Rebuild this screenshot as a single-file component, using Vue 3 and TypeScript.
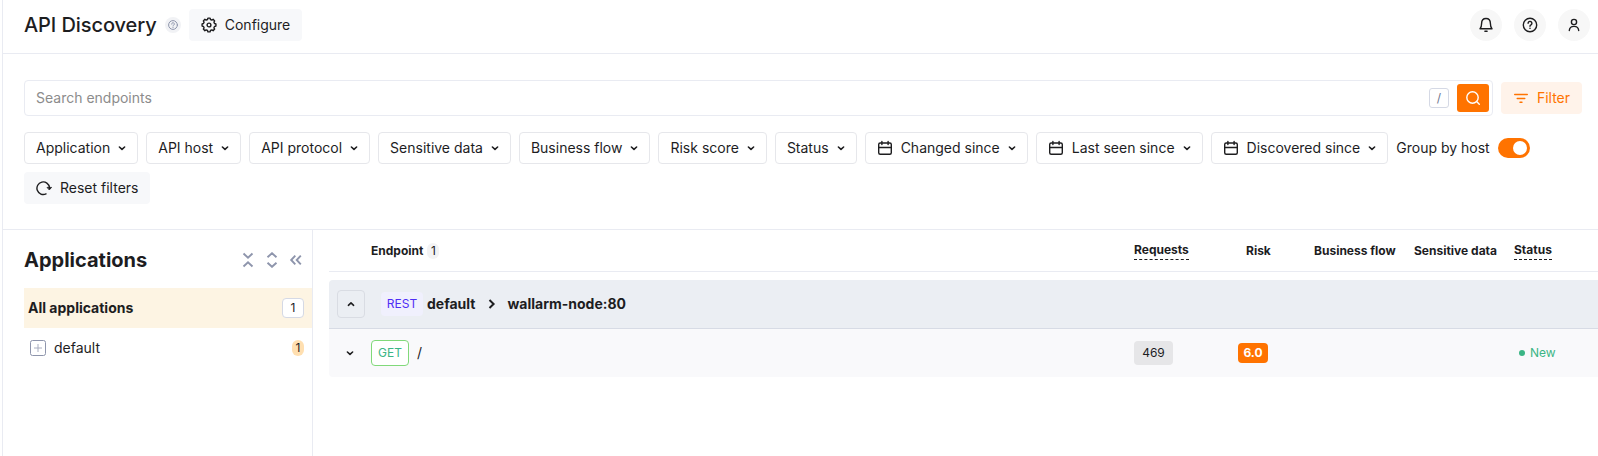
<script setup lang="ts">
interface FilterItem {
  label: string
  date?: boolean
}

const filters: FilterItem[] = [
  { label: 'Application' },
  { label: 'API host' },
  { label: 'API protocol' },
  { label: 'Sensitive data' },
  { label: 'Business flow' },
  { label: 'Risk score' },
  { label: 'Status' },
  { label: 'Changed since', date: true },
  { label: 'Last seen since', date: true },
  { label: 'Discovered since', date: true },
]

// Outline of a gear with eight teeth, centred in a 16 × 16 box
function gearOutline(): string {
  const points: string[] = []
  for (let tooth = 0; tooth < 8; tooth++) {
    for (const [offset, radius] of [[-15, 5.7], [-9, 7], [9, 7], [15, 5.7]]) {
      const angle = ((tooth * 45 + offset) * Math.PI) / 180
      points.push(`${(8 + radius * Math.cos(angle)).toFixed(2)} ${(8 + radius * Math.sin(angle)).toFixed(2)}`)
    }
  }
  return `M${points.join('L')}Z`
}

const gear = gearOutline()
</script>

<template>
  <div class="page">
    <header class="topbar">
      <h1 class="title">API Discovery</h1>
      <span class="hint">
        <svg width="10" height="10" viewBox="0 0 10 10" class="line"><circle cx="5" cy="5" r="4.400" /><path d="M3.700 4.100a1.300 1.300 0 1 1 2 1c-.5.3-.7.500-.7.900M5 7.400v.1" /></svg>
      </span>
      <button class="soft configure">
        <svg width="16" height="16" viewBox="0 0 16 16" class="line"><path :d="gear" /><circle cx="8" cy="8" r="1.900" /></svg>
        <span>Configure</span>
      </button>
      <div class="actions">
        <button class="round">
          <svg width="16" height="16" viewBox="0 0 16 16" class="line"><path d="M2 11.700c1.300-1.200 1.600-2.700 1.600-5.200C3.600 3.500 5.300 1.500 8 1.500s4.400 2 4.400 5c0 2.500.3 4 1.600 5.200z" /><path d="M6.900 14.300h2.200" /></svg>
        </button>
        <button class="round">
          <svg width="16" height="16" viewBox="0 0 16 16" class="line"><circle cx="8" cy="8" r="6.700" /><path d="M6.100 6.300a1.900 1.900 0 1 1 2.900 1.600c-.7.4-1 .7-1 1.300M8 11.100v.3" /></svg>
        </button>
        <button class="round">
          <svg width="16" height="16" viewBox="0 0 16 16" class="line"><circle cx="8" cy="5" r="2.600" /><path d="M3.300 13.500c.2-2.600 2-4.100 4.700-4.100s4.500 1.500 4.700 4.100" /></svg>
        </button>
      </div>
    </header>

    <section class="controls">
      <div class="search-row">
        <div class="search">
          <span class="placeholder">Search endpoints</span>
          <kbd>/</kbd>
          <button class="go">
            <svg width="16" height="16" viewBox="0 0 16 16" class="line"><circle cx="7.500" cy="7.500" r="5.700" /><path d="M11.600 11.600l2.700 2.700" /></svg>
          </button>
        </div>
        <button class="filter-btn">
          <svg width="16" height="16" viewBox="0 0 16 16" class="line"><path d="M1.700 4.500h12.600M4.200 8.500h7.600M7 12.200h2" /></svg>
          <span>Filter</span>
        </button>
      </div>
      <div class="filters">
        <button v-for="f in filters" :key="f.label" class="chip">
          <svg v-if="f.date" class="line cal" width="16" height="16" viewBox="0 0 16 16"><rect x="1.700" y="3" width="12.600" height="11.300" rx="1.500" /><path d="M1.700 7.500h12.600M4.900 1.500v3M11.100 1.500v3" /></svg>
          <span>{{ f.label }}</span>
          <svg class="line chev" width="16" height="16" viewBox="0 0 16 16"><path d="M5.400 7L8 9.400 10.600 7" /></svg>
        </button>
        <label class="group">
          <span>Group by host</span>
          <span class="toggle"><i></i></span>
        </label>
        <button class="soft reset">
          <svg width="16" height="16" viewBox="0 0 16 16" class="line"><path d="M10 13.900A6.300 6.300 0 1 1 13.500 7.500" /><path class="tip" d="M11.400 7.400h4.200l-2.100 2.300z" /></svg>
          <span>Reset filters</span>
        </button>
      </div>
    </section>

    <main class="body">
      <aside class="sidebar">
        <div class="side-head">
          <h2>Applications</h2>
          <svg width="16" height="16" viewBox="0 0 16 16" class="line tool"><path d="M3.500 1.500L8 5.700l4.500-4.200M3.500 14.500L8 10.300l4.500 4.200" /></svg>
          <svg width="16" height="16" viewBox="0 0 16 16" class="line tool"><path d="M3.500 5.300L8 1.200l4.500 4.100M3.500 10.700L8 14.800l4.500-4.100" /></svg>
          <svg width="16" height="16" viewBox="0 0 16 16" class="line tool"><path d="M7.300 3.700L3.200 8l4.100 4.300M12.800 3.700L8.700 8l4.100 4.300" /></svg>
        </div>
        <div class="app all">
          <span>All applications</span>
          <span class="count">1</span>
        </div>
        <div class="app item">
          <svg class="plus" width="16" height="16" viewBox="0 0 16 16"><rect x=".5" y=".5" width="15" height="15" rx="2" /><path d="M4 8h8M8 4v8" /></svg>
          <span>default</span>
          <span class="pill">1</span>
        </div>
      </aside>

      <div class="table">
        <div class="row head">
          <span></span>
          <span class="endpoint">Endpoint <i class="num">1</i></span>
          <span><b class="sort">Requests</b></span>
          <span class="risk-title">Risk</span>
          <span>Business flow</span>
          <span>Sensitive data</span>
          <span><b class="sort">Status</b></span>
        </div>
        <div class="host">
          <button class="expand">
            <svg class="line" width="16" height="16" viewBox="0 0 16 16"><path d="M5.400 9.300L8 6.900l2.600 2.400" /></svg>
          </button>
          <span class="rest">REST</span>
          <strong>default</strong>
          <svg class="line sep" width="16" height="16" viewBox="0 0 16 16"><path d="M6.500 4l4.100 4-4.100 4" /></svg>
          <strong>wallarm-node:80</strong>
        </div>
        <div class="row data">
          <span class="open">
            <svg class="line" width="16" height="16" viewBox="0 0 16 16"><path d="M5.400 7L8 9.400 10.600 7" /></svg>
          </span>
          <span class="path"><span class="get">GET</span>/</span>
          <span><span class="requests">469</span></span>
          <span><span class="risk">6.0</span></span>
          <span></span>
          <span></span>
          <span class="new"><i></i>New</span>
        </div>
      </div>
    </main>
  </div>
</template>

<style>
body {
  margin: 0;
  background: #fff;
}
</style>

<style scoped>
* {
  box-sizing: border-box;
}
.page {
  width: 1596px;
  height: 456px;
  margin-left: 2px;
  border-left: 1px solid #e9ebf2;
  overflow: hidden;
  display: flex;
  flex-direction: column;
  background: #fff;
  color: #1d1d1f;
  font: 14px/20px Inter, "Liberation Sans", sans-serif;
}
button {
  font: inherit;
  color: inherit;
  border: 0;
  padding: 0;
  display: flex;
  align-items: center;
  justify-content: center;
}
svg {
  display: block;
  flex: none;
}
.line {
  fill: none;
  stroke: currentColor;
  stroke-width: 1.4;
  stroke-linecap: round;
  stroke-linejoin: round;
}
.topbar {
  flex: none;
  height: 54px;
  padding: 0 8px 4px 21px;
  display: flex;
  align-items: center;
  border-bottom: 1px solid #e9ebf2;
}
.title {
  margin: 0;
  width: 141px;
  font-size: 20px;
  line-height: 28px;
  font-weight: 500;
  letter-spacing: -0.08px;
  white-space: nowrap;
}
.hint {
  width: 16px;
  height: 16px;
  border-radius: 50%;
  background: #f1f2f5;
  color: #8e95ac;
  display: flex;
  align-items: center;
  justify-content: center;
}
.hint svg {
  stroke-width: 1;
}
.soft {
  height: 32px;
  gap: 8px;
  padding: 0 12px;
  border-radius: 4px;
  background: #f7f8fa;
}
.configure {
  width: 113px;
  margin-left: 8px;
}
.tip {
  fill: currentColor;
  stroke-width: 0.8;
}
.actions {
  margin-left: auto;
  display: flex;
  gap: 12px;
}
.round {
  width: 32px;
  height: 32px;
  border-radius: 50%;
  background: #f7f7f7;
}
.controls {
  flex: none;
  height: 176px;
  padding: 26px 16px 0 21px;
  border-bottom: 1px solid #e9ebf2;
}
.search-row {
  display: flex;
  align-items: center;
  gap: 8px;
}
.search {
  width: 1469px;
  height: 36px;
  padding: 0 3px 0 11px;
  display: flex;
  align-items: center;
  border: 1px solid #e9ebf2;
  border-radius: 4px;
}
.placeholder {
  flex: 1;
  color: #8c8c8c;
}
kbd {
  width: 20px;
  height: 20px;
  margin-right: 8px;
  border: 1px solid #d5d9e5;
  border-radius: 3px;
  color: #6f7690;
  font: 12px/18px Inter, sans-serif;
  text-align: center;
}
.go {
  width: 32px;
  height: 28px;
  border-radius: 3px;
  background: #ff7300;
  color: #fff;
}
.filter-btn {
  width: 81px;
  height: 32px;
  gap: 8px;
  border-radius: 4px;
  background: #fff3ea;
  color: #ff7300;
}
.filters {
  margin-top: 16px;
  display: flex;
  flex-wrap: wrap;
  gap: 8px;
}
.chip {
  height: 32px;
  padding: 0 7px 0 11px;
  background: #fff;
  border: 1px solid #e6e7eb;
  border-radius: 4px;
  white-space: nowrap;
}
.cal {
  margin-right: 8px;
}
.chev {
  margin-left: 4px;
  stroke-width: 1.6;
}
.group {
  height: 32px;
  display: flex;
  align-items: center;
  gap: 8px;
  margin-right: 40px;
}
.toggle {
  width: 32px;
  height: 20px;
  padding: 3px;
  border-radius: 10px;
  background: #ff7300;
  display: flex;
  justify-content: flex-end;
}
.toggle i {
  width: 14px;
  height: 14px;
  border-radius: 50%;
  background: #fff;
}
.body {
  flex: 1;
  display: flex;
}
.sidebar {
  width: 310px;
  padding-left: 21px;
  border-right: 1px solid #e9ebf2;
}
.side-head {
  height: 58px;
  padding: 2px 8px 0 0;
  display: flex;
  align-items: center;
  gap: 8px;
}
.side-head h2 {
  flex: 1;
  margin: 0;
  font-size: 20px;
  line-height: 28px;
  font-weight: 700;
}
.tool {
  color: #8e95ac;
  stroke-width: 1.9;
  stroke-linecap: butt;
  stroke-linejoin: miter;
}
.app {
  height: 40px;
  display: flex;
  align-items: center;
  justify-content: space-between;
}
.all {
  padding: 0 8px 0 4px;
  background: #fdf4e3;
  font-weight: 700;
}
.count {
  width: 22px;
  height: 20px;
  border: 1px solid #d5d9e5;
  border-radius: 4px;
  background: #fff;
  font: 12px/18px Inter, sans-serif;
  text-align: center;
}
.item {
  padding: 0 8px 0 6px;
}
.item > span:nth-child(2) {
  flex: 1;
  margin-left: 8px;
}
.plus {
  fill: none;
  stroke: #8e95ac;
}
.plus path {
  stroke: #a9aec0;
}
.pill {
  width: 12px;
  height: 16px;
  border-radius: 6px;
  background: #ffdfb0;
  font-size: 12px;
  line-height: 16px;
  text-align: center;
}
.table {
  flex: 1;
  padding-left: 16px;
}
.row {
  display: grid;
  grid-template-columns: 42px 763px 104px 76px 100px 100px 1fr;
  align-items: center;
}
.head {
  height: 42px;
  border-bottom: 1px solid #e9ebf2;
  font-size: 12px;
  line-height: 16px;
  font-weight: 700;
}
.endpoint {
  display: flex;
  gap: 4px;
}
.num {
  width: 12px;
  height: 16px;
  border-radius: 6px;
  background: #f3f3f4;
  font-style: normal;
  font-weight: 400;
  text-align: center;
}
.sort {
  display: inline-block;
  font-weight: 700;
  padding-bottom: 1px;
  border-bottom: 1px dashed #1d1d1f;
}
.risk-title {
  padding-left: 8px;
}
.host {
  height: 49px;
  margin-top: 8px;
  padding-left: 8px;
  display: flex;
  align-items: center;
  background: #ebeef3;
  border-bottom: 1px solid #d7dbe5;
  border-radius: 4px 0 0 0;
}
.expand {
  width: 28px;
  height: 28px;
  margin-right: 16px;
  border: 1px solid #d9dce3;
  border-radius: 4px;
  background: transparent;
}
.expand svg,
.open svg {
  stroke-width: 1.6;
}
.rest {
  width: 42px;
  height: 24px;
  margin-right: 4px;
  border-radius: 4px;
  background: #f0f0fd;
  color: #4f2df5;
  font-size: 12px;
  line-height: 24px;
  text-align: center;
}
.host strong {
  font-weight: 700;
}
.sep {
  margin: 0 8px;
  stroke-width: 2;
  stroke-linecap: butt;
  stroke-linejoin: miter;
}
.data {
  height: 48px;
  background: #f9f9fb;
  border-radius: 0 0 0 4px;
}
.open {
  padding-left: 13px;
}
.path {
  display: flex;
  align-items: center;
  gap: 8px;
}
.get {
  width: 38px;
  height: 26px;
  border: 1px solid #81d97a;
  border-radius: 4px;
  color: #3bb585;
  background: #fff;
  font-size: 12px;
  line-height: 24px;
  text-align: center;
}
.requests,
.risk {
  display: block;
  border-radius: 4px;
  font-size: 12px;
  text-align: center;
}
.requests {
  width: 39px;
  height: 24px;
  line-height: 24px;
  background: #e6e6e8;
}
.risk {
  width: 30px;
  height: 20px;
  line-height: 20px;
  background: #ff7300;
  color: #fff;
  font-weight: 700;
}
.new {
  padding-left: 5px;
  display: flex;
  align-items: center;
  gap: 5px;
  color: #3bb585;
  font-size: 12px;
}
.new i {
  width: 6px;
  height: 6px;
  border-radius: 50%;
  background: #3bb585;
}
</style>
